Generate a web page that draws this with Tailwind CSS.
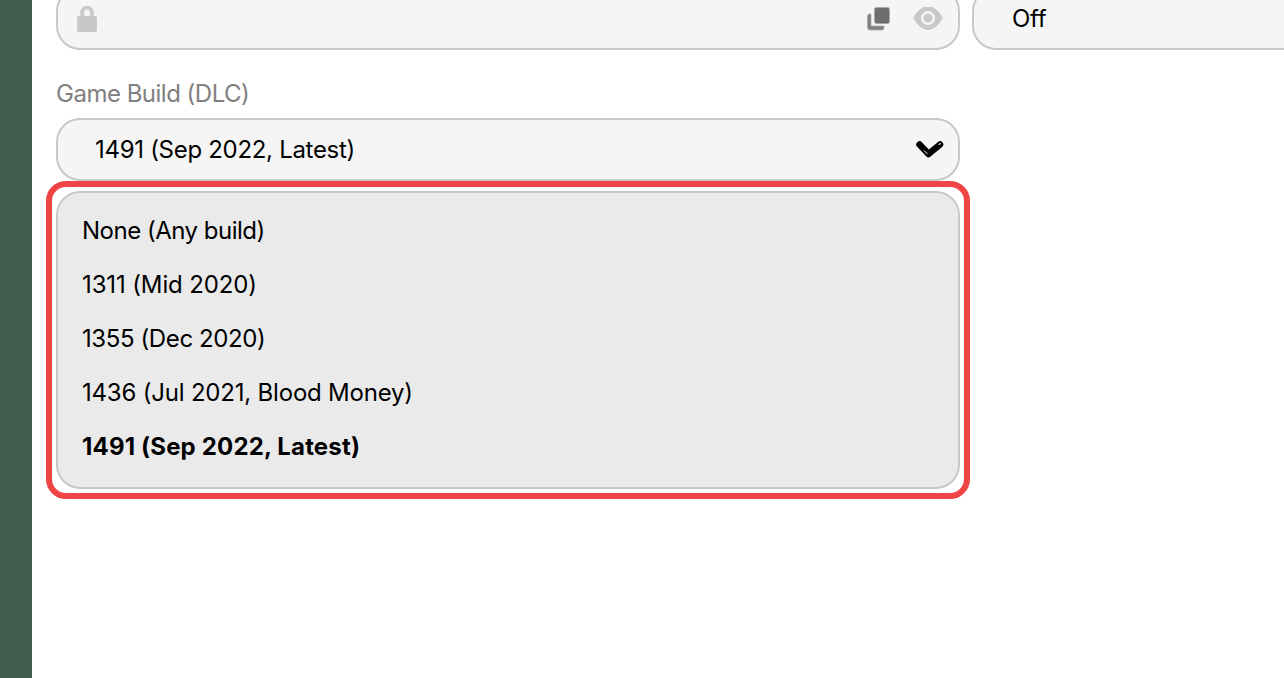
<!DOCTYPE html>
<html>
  <head>
    <title>Game Build</title>
    <meta charset="UTF-8" />
    <script src="https://cdn.jsdelivr.net/npm/@tailwindcss/browser@4"></script>
  </head>
  <body class="bg-white">
    <div class="flex h-[678px] w-[1284px] overflow-hidden font-['Inter',sans-serif] text-[24px] text-black">
      <div class="w-8 shrink-0 bg-[#425e50]"></div>
      <div class="flex-1 pl-6">
        <div class="flex gap-3 -mt-[13px] w-[1300px]">
          <div class="flex items-center h-[63px] w-[904px] rounded-3xl border-2 border-[#c8c8c8] bg-[#f5f5f5] pl-[18px] pr-[14px]">
            <svg class="w-[22px] h-[30px]" viewBox="0 0 22 30">
              <path d="M6 13V8.5a5 5 0 0 1 10 0V13" fill="none" stroke="#c8c8c8" stroke-width="3.5" />
              <path d="M8.5 12V8.5a2.5 2.5 0 0 1 5 0V12" fill="none" stroke="#e4e4e4" stroke-width="1" />
              <rect x="1" y="12" width="20" height="16" rx="2" fill="#c8c8c8" />
            </svg>
            <svg class="ml-auto w-6 h-6" viewBox="0 0 24 24">
              <path d="M0.5 9q0-2 2-2h1.500v12h13v2q0 2-2 2h-12q-2.500 0-2.500-2.500z" fill="#808080" stroke="#a8a8a8" stroke-width="0.8" />
              <rect x="7.500" y="0.500" width="15" height="16" rx="2" fill="#6e6e6e" stroke="#a8a8a8" />
            </svg>
            <svg class="ml-[21px] w-8 h-6" viewBox="0 0 32 24">
              <path fill-rule="evenodd" d="M1 11C6 3 11 -1 16 -1s10 4 15 12c-5 8-10 12-15 12S6 19 1 11zm15-7a7 7 0 1 0 0 14 7 7 0 0 0 0-14z" fill="#c8c8c8" />
              <circle cx="16" cy="11" r="4.500" fill="#c8c8c8" />
            </svg>
          </div>
          <div class="flex items-center h-[63px] flex-1 rounded-3xl border-2 border-[#c8c8c8] bg-[#f5f5f5] pl-[38px] tracking-[-0.3px]">Off</div>
        </div>
        <div class="w-[904px]">
          <div class="mt-[30px] leading-[28px] text-[#808080] tracking-[-0.5px]">Game Build (DLC)</div>
          <div class="mt-[10px] flex items-center h-[63px] rounded-3xl border-2 border-[#c8c8c8] bg-[#f5f5f5] pl-[37px] pr-[14px]">
            <span class="tracking-[-0.3px]">1491 (Sep 2022, Latest)</span>
            <svg class="ml-auto w-7 h-5" viewBox="0 0 28 20">
              <path d="M3.500 4.500L12.500 14L24 4.500" fill="none" stroke="#000" stroke-width="6.500" stroke-linecap="round" stroke-linejoin="round" />
              <path d="M8 10.500L11.500 14M22.500 4.500L25 3.500" fill="none" stroke="#fff" stroke-width="1" />
            </svg>
          </div>
          <div class="-mx-[10px] rounded-[20px] border-[6px] border-[#ef4444] p-1">
            <div class="rounded-3xl border-2 border-[#c8c8c8] bg-[#eaeaea] pt-[11px] pb-[13px]">
              <div class="h-[54px] flex items-center pl-6 tracking-[-0.5px]">None (Any build)</div>
              <div class="h-[54px] flex items-center pl-6 tracking-[-0.13px]">1311 (Mid 2020)</div>
              <div class="h-[54px] flex items-center pl-6 tracking-[-0.4px]">1355 (Dec 2020)</div>
              <div class="h-[54px] flex items-center pl-6 tracking-[-0.2px]">1436 (Jul 2021, Blood Money)</div>
              <div class="h-[54px] flex items-center pl-6 font-bold tracking-[0.17px]">1491 (Sep 2022, Latest)</div>
            </div>
          </div>
        </div>
      </div>
    </div>
  </body>
</html>
